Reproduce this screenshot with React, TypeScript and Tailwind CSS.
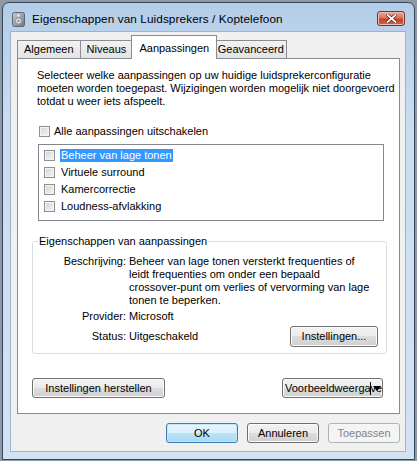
import React from "react";

function Check() {
  return (
    <span className="inline-block w-[11px] h-[11px] shrink-0 border border-[#8e8f8f] bg-[linear-gradient(135deg,#d4d4d4,#f6f6f6)] shadow-[inset_0_0_0_1px_#f4f4f4]" />
  );
}

function Btn({ children, className = "" }: { children: React.ReactNode; className?: string }) {
  return (
    <div
      className={
        "flex items-center justify-center rounded-[3px] border border-[#707070] bg-[linear-gradient(#f2f2f2_0%,#ebebeb_50%,#dddddd_50%,#cfcfcf_100%)] shadow-[inset_0_0_0_1px_#fbfbfb] " +
        className
      }
    >
      {children}
    </div>
  );
}

function Tab({ label, active, first }: { label: string; active?: boolean; first?: boolean }) {
  if (active) {
    return (
      <div className="relative z-10 -mx-[2px] -mb-px flex h-[24px] w-[86px] items-start justify-center border border-b-0 border-[#898c95] bg-white pt-[4px]">
        {label}
      </div>
    );
  }
  return (
    <div
      className={
        "flex h-[18px] items-center justify-center border border-b-0 border-[#898c95] bg-[linear-gradient(#f2f2f2,#e3e3e3)] px-[6px] " +
        (first ? "" : "border-l-0")
      }
    >
      {label}
    </div>
  );
}

const items = ["Beheer van lage tonen", "Virtuele surround", "Kamercorrectie", "Loudness-afvlakking"];

export default function App() {
  return (
    <div className="h-[461px] w-[417px] overflow-hidden bg-[#8d99a4] pl-[2px] pt-[2px] font-['Liberation_Sans',Arial,sans-serif] text-[11px] text-black">
      {/* Window */}
      <div className="flex h-[458px] w-[413px] flex-col rounded-t-[7px] border border-[#34475a] bg-[linear-gradient(#b4cde8,#c9dcf0_25%,#d3e3f3_100%)] pl-[7px] pr-[8px] pb-[7px]">
        {/* Title bar */}
        <div className="flex h-[28px] shrink-0 items-start">
          <svg width="13" height="15" viewBox="0 0 13 15" className="ml-[2px] mt-[9px]">
            <defs>
              <linearGradient id="spk" x1="0" y1="0" x2="1" y2="1">
                <stop offset="0" stopColor="#c9ced4" />
                <stop offset="1" stopColor="#6f7780" />
              </linearGradient>
            </defs>
            <rect x="0.5" y="0.5" width="12" height="14" rx="2" fill="url(#spk)" stroke="#5c6570" />
            <circle cx="6.5" cy="9" r="3" fill="#e9ecef" stroke="#8a929b" />
            <circle cx="6.5" cy="9" r="1.2" fill="#7d858e" />
            <circle cx="6.5" cy="3.5" r="1.3" fill="#e9ecef" />
          </svg>
          <div className="ml-[7px] mt-[8px] text-[11.75px] leading-[16px] tracking-[0.1px]">
            Eigenschappen van Luidsprekers / Koptelefoon
          </div>
          <div className="ml-auto mr-[1px] mt-[8px] flex h-[15px] w-[28px] items-center justify-center rounded-[3px] border border-[#7c3327] bg-[linear-gradient(#e9ac9c_0%,#d7765f_45%,#c4432c_55%,#d0644a_100%)] shadow-[inset_0_0_0_1px_#f1b9aa]">
            <svg width="11" height="9" viewBox="0 0 11 9">
              <path d="M1.5 1 L9.5 8 M9.5 1 L1.5 8" stroke="#5a1d14" strokeWidth="3.2" strokeLinecap="square" />
              <path d="M1.5 1 L9.5 8 M9.5 1 L1.5 8" stroke="#ffffff" strokeWidth="1.8" strokeLinecap="square" />
            </svg>
          </div>
        </div>

        {/* Client area */}
        <div className="flex h-[421px] flex-col border border-[#9fb3c8] bg-[#f0f0f0]">
          {/* Tabs */}
          <div className="flex h-[26px] shrink-0 items-end pl-[6px]">
            <Tab label="Algemeen" first />
            <Tab label="Niveaus" />
            <Tab label="Aanpassingen" active />
            <div className="flex h-[18px] w-[72px] items-center justify-center border border-b-0 border-l-0 border-[#898c95] bg-[linear-gradient(#f2f2f2,#e3e3e3)]">
              Geavanceerd
            </div>
          </div>

          {/* Panel */}
          <div className="ml-[6px] flex h-[356px] w-[383px] flex-col border border-[#898c95] bg-white">
            <p className="ml-[19px] mt-[10px] whitespace-nowrap leading-[13px]">
              Selecteer welke aanpassingen op uw huidige luidsprekerconfiguratie
              <br />
              moeten worden toegepast. Wijzigingen worden mogelijk niet doorgevoerd
              <br />
              totdat u weer iets afspeelt.
            </p>

            <div className="ml-[21px] mt-[17px] flex h-[13px] items-center gap-[4px]">
              <Check />
              <span>Alle aanpassingen uitschakelen</span>
            </div>

            {/* List */}
            <div className="ml-[20px] mt-[6px] h-[77px] w-[346px] shrink-0 border border-[#828790] bg-white pl-[5px] pt-[2px]">
              {items.map((it, i) => (
                <div key={it} className="flex h-[17px] items-center gap-[5px]">
                  <Check />
                  <span
                    className={
                      i === 0
                        ? "bg-[#3399ff] px-[1px] leading-[13px] text-white"
                        : "px-[1px] leading-[13px]"
                    }
                  >
                    {it}
                  </span>
                </div>
              ))}
            </div>

            {/* Group box */}
            <div className="relative ml-[14px] mt-[20px] h-[113px] w-[355px] shrink-0 rounded-[3px] border border-[#d5dfe5] pt-[13px]">
              <span className="absolute -top-[7px] left-[5px] bg-white px-[1px] leading-[13px]">
                Eigenschappen van aanpassingen
              </span>
              <div className="flex leading-[13px]">
                <span className="w-[93px] text-right">Beschrijving:</span>
                <span className="ml-[3px] whitespace-nowrap">
                  Beheer van lage tonen versterkt frequenties of
                  <br />
                  leidt frequenties om onder een bepaald
                  <br />
                  crossover-punt om verlies of vervorming van lage
                  <br />
                  tonen te beperken.
                </span>
              </div>
              <div className="mt-[3px] flex leading-[13px]">
                <span className="w-[93px] text-right">Provider:</span>
                <span className="ml-[3px]">Microsoft</span>
              </div>
              <div className="mt-[3px] flex h-[21px] items-center">
                <span className="w-[93px] text-right">Status:</span>
                <span className="ml-[3px]">Uitgeschakeld</span>
                <Btn className="ml-auto mr-[8px] h-[21px] w-[88px]">Instellingen...</Btn>
              </div>
            </div>

            {/* Bottom row */}
            <div className="mt-[24px] flex items-center justify-between pl-[14px] pr-[16px]">
              <Btn className="h-[20px] w-[133px]">Instellingen herstellen</Btn>
              <div className="relative h-[20px] w-[101px] overflow-hidden rounded-[3px] border border-[#707070] bg-[linear-gradient(#f2f2f2_0%,#ebebeb_50%,#dddddd_50%,#cfcfcf_100%)] shadow-[inset_0_0_0_1px_#fbfbfb]">
                <span className="absolute left-[2px] top-[2px] whitespace-nowrap leading-[15px]">
                  Voorbeeldweergave
                </span>
                <span className="absolute left-[87px] top-[3px] h-[13px] w-[1px] bg-black" />
                <svg width="8" height="5" viewBox="0 0 8 5" className="absolute left-[90px] top-[7px]">
                  <path d="M0 0 H8 L4 5 Z" fill="#000" />
                </svg>
              </div>
            </div>
          </div>

          {/* Dialog buttons */}
          <div className="ml-[6px] mt-[9px] flex w-[383px] justify-end gap-[9px]">
            <div className="flex h-[20px] w-[72px] items-center justify-center rounded-[3px] border border-[#3c7fb1] bg-[linear-gradient(#e9f5fc_0%,#d9effb_50%,#bce4f9_50%,#a7d9f5_100%)] shadow-[inset_0_0_0_1px_#bfe7fa]">
              OK
            </div>
            <Btn className="h-[20px] w-[72px]">Annuleren</Btn>
            <div className="flex h-[20px] w-[72px] items-center justify-center rounded-[3px] border border-[#adb2b5] bg-[#f4f4f4] text-[#838383]">
              Toepassen
            </div>
          </div>
        </div>
      </div>
    </div>
  );
}
